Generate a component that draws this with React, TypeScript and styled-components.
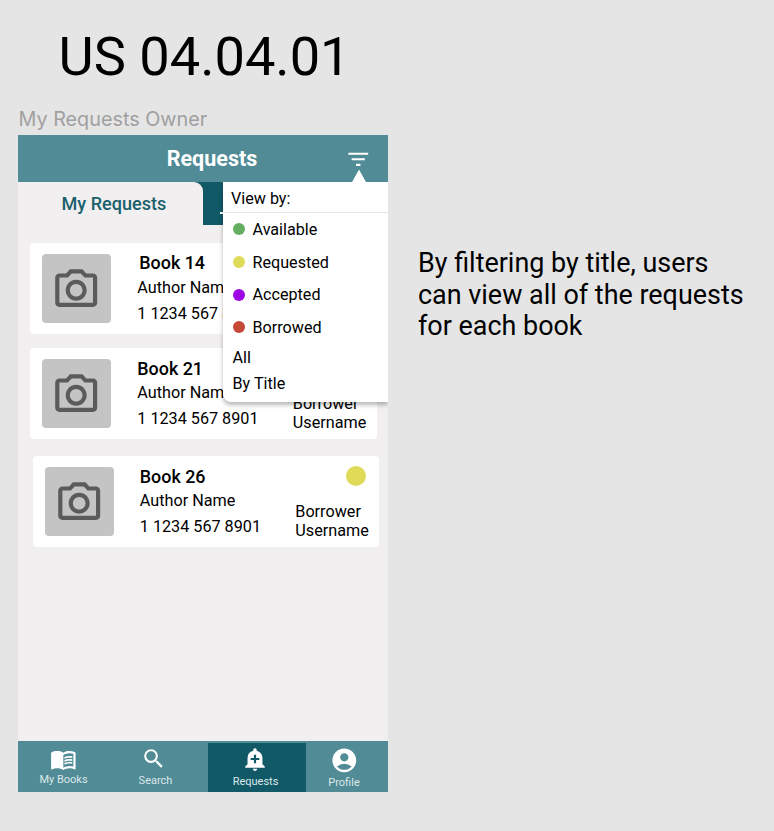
import React from 'react';
import styled, { createGlobalStyle } from 'styled-components';
import {
  MdAccountCircle,
  MdAddAlert,
  MdFilterList,
  MdMenuBook,
  MdOutlineCameraAlt,
  MdSearch,
} from 'react-icons/md';

const GlobalStyle = createGlobalStyle`
  * { box-sizing: border-box; }
  html, body { margin: 0; padding: 0; }
  body {
    background: #e5e5e5;
    color: #000;
    font-family: Roboto, sans-serif;
    overflow: hidden;
  }
  svg { display: block; flex: none; }
`;

const Board = styled.main`
  width: 774px;
  height: 831px;
  padding: 25px 0 0 18px;
  background: #e5e5e5;
`;

const StoryTitle = styled.h1`
  margin: 0 0 0 40.5px;
  font-size: 54.2px;
  line-height: 64px;
  font-weight: 400;
  white-space: nowrap;
`;

const FrameLabel = styled.div`
  margin-top: 18px;
  height: 28px;
  padding-left: 0.5px;
  font-family: Inter, sans-serif;
  font-size: 19.8px;
  line-height: 24px;
  color: #a0a0a0;
  white-space: nowrap;
`;

const Columns = styled.div`
  display: flex;
  align-items: flex-start;
`;

const Note = styled.p`
  margin: 113px 0 0 30px;
  width: 340px;
  font-size: 26.93px;
  line-height: 31.5px;
  white-space: pre-line;
`;

const Phone = styled.section`
  position: relative;
  flex: none;
  display: flex;
  flex-direction: column;
  width: 370px;
  height: 657px;
  overflow: hidden;
  background: #f1eff0;
`;

const Header = styled.header`
  display: grid;
  grid-template-columns: 388px;
  align-items: center;
  height: 47px;
  background: #508b96;
  color: #fff;
`;

const HeaderTitle = styled.h2`
  grid-area: 1 / 1;
  margin: 0;
  font-size: 21.5px;
  line-height: 26px;
  font-weight: 700;
  text-align: center;
`;

const FilterButton = styled.button`
  grid-area: 1 / 1;
  margin: 2px 0 0 327.4px;
  width: 27px;
  padding: 0;
  border: 0;
  background: none;
  color: #fff;
`;

const Tabs = styled.div`
  display: flex;
  height: 43px;
  background: #115966;
  color: #fff;
`;

const ActiveTab = styled.div`
  width: 185px;
  padding: 9px 0 0 43.5px;
  border-radius: 0 9px 0 0;
  background: #f1eff0;
  color: #1a5f6c;
  font-size: 18.1px;
  line-height: 26px;
  font-weight: 500;
`;

const OtherTab = styled.div`
  flex: 1;
  margin: 30px 20px 0 17px;
  height: 2px;
  background: #fff;
`;

const CardList = styled.div`
  flex: 1;
  padding-top: 18px;
`;

const Card = styled.article<{ $left: number; $gap: number }>`
  display: flex;
  width: 346.5px;
  height: 90.5px;
  margin: 0 0 ${(p) => p.$gap}px ${(p) => p.$left}px;
  border-radius: 4px;
  background: #fff;
`;

const Thumb = styled.div`
  flex: none;
  display: flex;
  justify-content: center;
  width: 69px;
  height: 69px;
  margin: 11px 0 0 12px;
  padding-top: 10.5px;
  border-radius: 4px;
  background: #c4c4c4;
  color: #5b5b5b;
`;

const Details = styled.div`
  flex: none;
  width: 181.8px;
  padding: 10px 0 0 26.3px;
  font-size: 16.2px;
  line-height: 26px;
  white-space: nowrap;
`;

const BookTitle = styled.h3<{ $indent: number; $drop: number }>`
  margin: ${(p) => p.$drop}px 0 ${(p) => 2 - p.$drop}px ${(p) => p.$indent}px;
  font-size: 17.9px;
  line-height: 20px;
  font-weight: 500;
`;

const Line = styled.div`
  height: 26px;
`;

const Side = styled.div`
  display: flex;
  flex-direction: column;
  width: 76px;
  font-size: 16.2px;
  line-height: 19px;
`;

const Status = styled.span`
  width: 20px;
  height: 20px;
  margin: 9.5px 0 16.5px 50.5px;
  border-radius: 50%;
  background: #dfdb58;
`;

const Menu = styled.div`
  position: absolute;
  left: 205px;
  top: 47px;
  width: 165px;
  height: 220px;
  border-radius: 0 0 0 8px;
  background: #fff;
  box-shadow: 0 3px 4px rgba(0, 0, 0, 0.28);
  font-size: 16.15px;
`;

const Pointer = styled.svg`
  position: absolute;
  left: 333px;
  top: 34px;
`;

const MenuTitle = styled.div`
  height: 31px;
  padding: 3.5px 0 0 8px;
  border-bottom: 1px solid #e6e6e6;
  line-height: 26px;
`;

const MenuItem = styled.div<{ $height: number }>`
  display: flex;
  align-items: center;
  gap: 8px;
  height: ${(p) => p.$height}px;
  padding-left: 9.5px;
`;

const Dot = styled.span<{ $color: string }>`
  width: 12px;
  height: 12px;
  border-radius: 50%;
  background: ${(p) => p.$color};
`;

const Nav = styled.nav`
  display: grid;
  grid-template-columns: 91px 99px 98px 82px;
  height: 51px;
  background: #508b96;
`;

const NavItem = styled.a<{ $active?: boolean; $shift?: number }>`
  display: flex;
  flex-direction: column;
  align-items: center;
  margin-top: ${(p) => (p.$active ? 2 : 0)}px;
  padding-right: ${(p) => p.$shift ?? 0}px;
  background: ${(p) => (p.$active ? '#115966' : 'transparent')};
  color: #fff;
`;

const NavIcon = styled.span<{ $top: number; $nudge?: number }>`
  height: 0;
  padding-top: ${(p) => p.$top}px;
  padding-right: ${(p) => p.$nudge ?? 0}px;
`;

const NavLabel = styled.span<{ $top: number }>`
  margin-top: ${(p) => p.$top}px;
  font-size: 11px;
  line-height: 14px;
  color: #dce8ea;
`;

const books = [
  { title: 'Book 14', left: 12, gap: 14.5, indent: 2, drop: 0 },
  { title: 'Book 21', left: 12, gap: 17.5, indent: 0, drop: 1 },
  { title: 'Book 26', left: 14.5, gap: 0, indent: 0, drop: 1 },
];

const filters = [
  { label: 'Available', color: '#65ad60', height: 32 },
  { label: 'Requested', color: '#dfdb58', height: 34 },
  { label: 'Accepted', color: '#9c09e4', height: 31 },
  { label: 'Borrowed', color: '#c44936', height: 34 },
];

export default function App() {
  return (
    <Board>
      <GlobalStyle />
      <StoryTitle>US 04.04.01</StoryTitle>
      <FrameLabel>My Requests Owner</FrameLabel>
      <Columns>
        <Phone>
          <Header>
            <HeaderTitle>Requests</HeaderTitle>
            <FilterButton aria-label="Filter">
              <MdFilterList size={26.5} />
            </FilterButton>
          </Header>
          <Tabs>
            <ActiveTab>My Requests</ActiveTab>
            <OtherTab />
          </Tabs>
          <CardList>
            {books.map((b) => (
              <Card key={b.title} $left={b.left} $gap={b.gap}>
                <Thumb>
                  <MdOutlineCameraAlt size={50.4} />
                </Thumb>
                <Details>
                  <BookTitle $indent={b.indent} $drop={b.drop}>{b.title}</BookTitle>
                  <Line>Author Name</Line>
                  <Line>1 1234 567 8901</Line>
                </Details>
                <Side>
                  <Status />
                  <span>Borrower</span>
                  <span>Username</span>
                </Side>
              </Card>
            ))}
          </CardList>
          <Nav>
            <NavItem>
              <NavIcon $top={5} $nudge={0.5}><MdMenuBook size={26.7} /></NavIcon>
              <NavLabel $top={27}>My Books</NavLabel>
            </NavItem>
            <NavItem $shift={6}>
              <NavIcon $top={5} $nudge={3}><MdSearch size={25.4} /></NavIcon>
              <NavLabel $top={28}>Search</NavLabel>
            </NavItem>
            <NavItem $active $shift={3}>
              <NavIcon $top={3} $nudge={1}><MdAddAlert size={26} /></NavIcon>
              <NavLabel $top={29}>Requests</NavLabel>
            </NavItem>
            <NavItem $shift={6}>
              <NavIcon $top={4.5}><MdAccountCircle size={28.6} /></NavIcon>
              <NavLabel $top={30.5}>Profile</NavLabel>
            </NavItem>
          </Nav>
          <Menu>
            <MenuTitle>View by:</MenuTitle>
            {filters.map((f) => (
              <MenuItem key={f.label} $height={f.height}>
                <Dot $color={f.color} />
                {f.label}
              </MenuItem>
            ))}
            <MenuItem $height={26}>All</MenuItem>
            <MenuItem $height={26}>By Title</MenuItem>
          </Menu>
          <Pointer width="16" height="14" viewBox="0 0 16 14">
            <path d="M8 0.5L15.5 14H0.5Z" fill="#fff" />
          </Pointer>
        </Phone>
        <Note>{'By filtering by title, users\ncan view all of the requests\nfor each book'}</Note>
      </Columns>
    </Board>
  );
}
